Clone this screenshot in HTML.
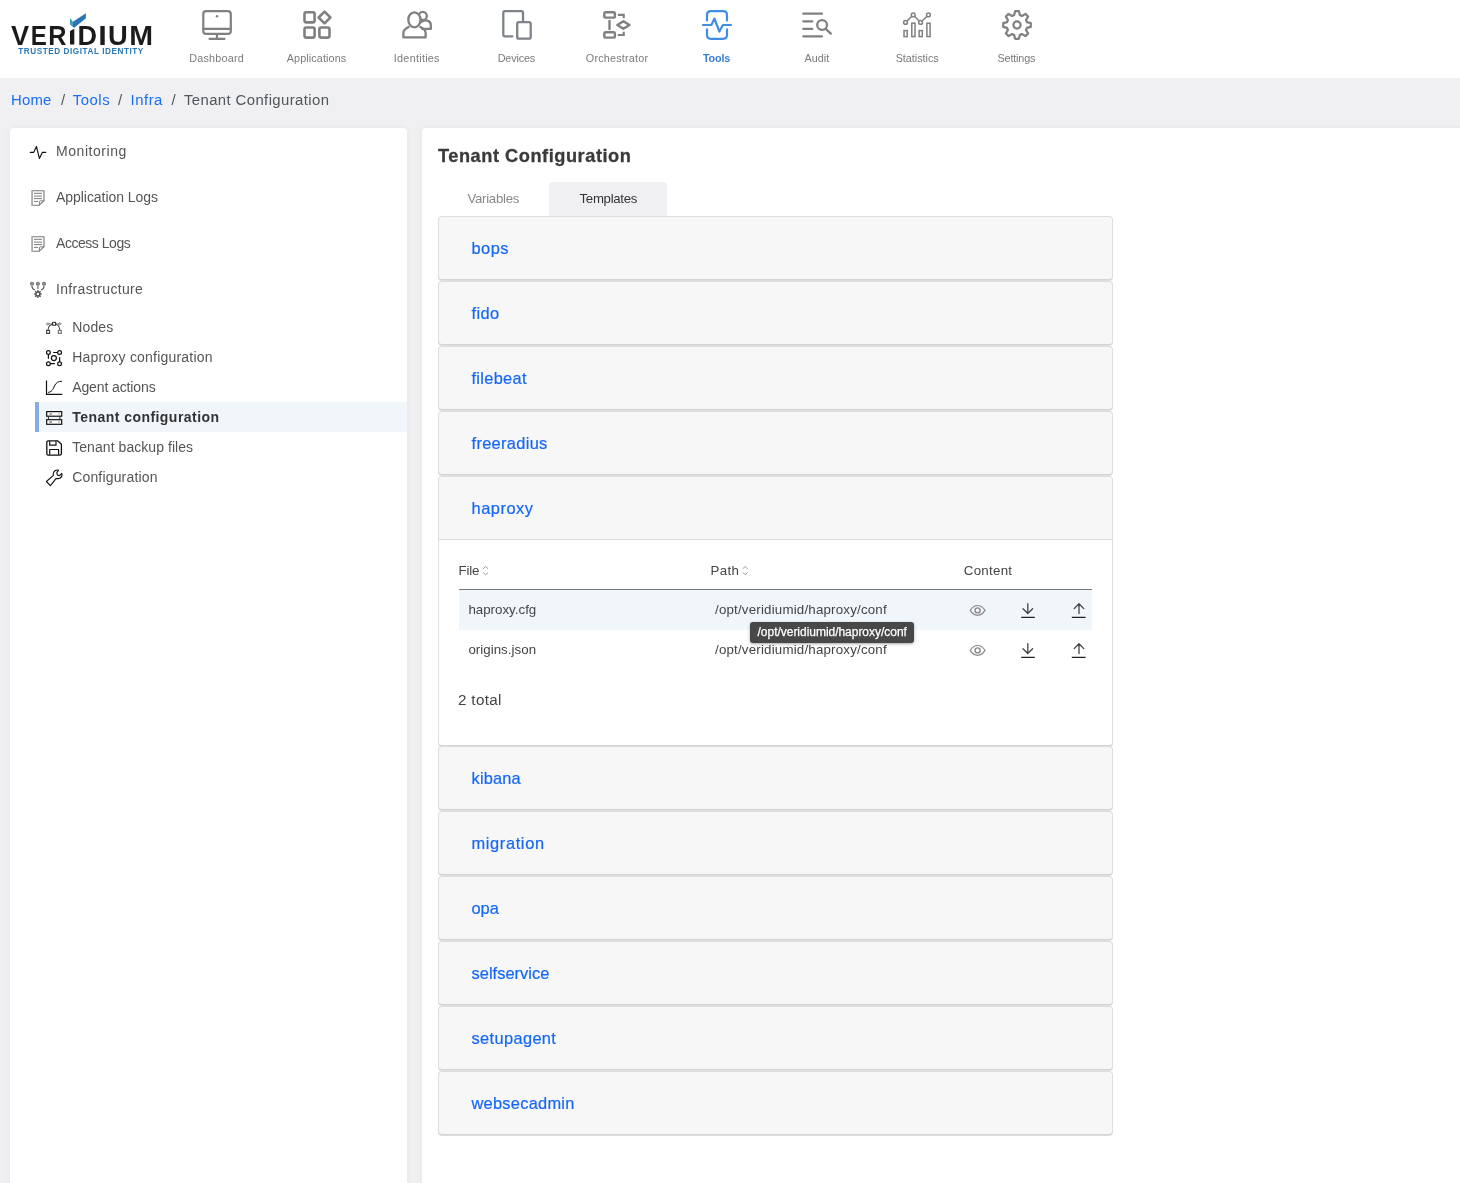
<!DOCTYPE html>
<html lang="en">
<head>
<meta charset="utf-8">
<title>Tenant Configuration</title>
<style>
*{box-sizing:border-box;margin:0;padding:0}
html,body{width:1460px;height:1183px;overflow:hidden}
body{background:#f0f0f2;font-family:"Liberation Sans",sans-serif;color:#555;position:relative}
.abs{position:absolute}
.t{position:absolute;white-space:nowrap;line-height:20px;height:20px}
#hdr{position:absolute;left:0;top:0;width:1460px;height:78px;background:#fff}
.nl{position:absolute;top:48px;width:100px;text-align:center;font-size:10.8px;line-height:20px;color:#7a7a7a}
.nl.act{color:#3b7ddd;font-weight:bold}
.ni{position:absolute;top:5px;width:40px;height:40px;overflow:visible}
.bc{font-size:15px;top:89.6px;color:#50565c}
.bc a{color:#1a6df8}
#side{position:absolute;left:10px;top:128px;width:397px;height:1075px;background:#fff;border-radius:4px;box-shadow:0 0 6px rgba(0,0,0,.05)}
#main{position:absolute;left:422px;top:128px;width:1058px;height:1075px;background:#fff;border-radius:4px;box-shadow:0 0 6px rgba(0,0,0,.05)}
.si{font-size:15px;color:#555;left:56px}
.ss{font-size:14.6px;color:#555;left:72px}
.sic{position:absolute;overflow:visible}
#selbg{position:absolute;left:35px;top:402px;width:372px;height:30px;background:#f1f6fb}
#selbar{position:absolute;left:35px;top:402px;width:4px;height:30px;background:#88ade6}
.pn{position:absolute;left:438px;width:675px;height:64px;background:#f7f7f7;border:1px solid #dedede;border-bottom-color:#d5d5d5;border-radius:4px;box-shadow:0 1px 0 rgba(0,0,0,.13)}
.pt{font-size:16.6px;color:#1567f7;left:472px;-webkit-text-stroke:.2px #1567f7}
.th{font-size:13.6px;color:#444}
.td{font-size:13.4px;color:#444}
</style>
</head>
<body>
<div id="wrap" style="position:absolute;left:0;top:0;width:1460px;height:1183px;will-change:transform">
<div id="hdr"></div>


<!-- header icons + logo -->
<svg class="abs" style="left:0;top:0" width="1460" height="78" viewBox="0 0 1460 78" fill="none" stroke-linecap="round" stroke-linejoin="round">
<!-- logo -->
<g stroke="none">
<g font-family="Liberation Sans" font-weight="bold" font-size="26.8" fill="#1b1b1d">
<text transform="translate(10.93 44.5) scale(1.016 1)">V</text>
<text transform="translate(30.71 44.5) scale(0.900 1)">E</text>
<text transform="translate(48.33 44.5) scale(0.942 1)">R</text>
<text transform="translate(77.41 44.5) scale(1.009 1)">D</text>
<text transform="translate(98.35 44.5) scale(1.146 1)">I</text>
<text transform="translate(107.96 44.5) scale(1.020 1)">U</text>
<text transform="translate(129.30 44.5) scale(1.066 1)">M</text>
</g>
<path d="M70 31.1 L74.3 28.8 L74.3 44.5 L70 44.5Z" fill="#1b1b1d"/>
<path d="M70 18 L72.9 21.8 L72.9 27 L70 24.6Z" fill="#3a9fb8"/>
<path d="M72.9 21.8 L85.9 13.3 L85.9 18.3 L74.2 27.8 L72.9 27Z" fill="#2a76b4"/>
<text x="18.3" y="53.6" font-family="Liberation Sans" font-weight="bold" font-size="8.2" fill="#2b7ab8" textLength="125" lengthAdjust="spacing">TRUSTED DIGITAL IDENTITY</text>
</g>
<!-- dashboard -->
<g stroke="#808080" stroke-width="2.2">
<rect x="203.3" y="11.1" width="27.5" height="22.8" rx="3"/>
<path d="M203.5 28.8H230.6M217 34.2V38.4M209.5 38.8H224.6"/>
<circle cx="217" cy="16.3" r="1.2" fill="#808080" stroke="none"/>
</g>
<!-- applications -->
<g stroke="#808080" stroke-width="2.6">
<rect x="304.5" y="12.3" width="10.1" height="10.1" rx="1.8"/>
<rect x="304.5" y="27.5" width="10.1" height="10.1" rx="1.8"/>
<rect x="319.4" y="27.5" width="10.1" height="10.1" rx="1.8"/>
<path d="M324.5 11.6L330.4 17.5L324.5 23.4L318.6 17.5Z"/>
</g>
<!-- identities -->
<g stroke="#808080" stroke-width="2.3">
<circle cx="422.8" cy="15.9" r="4"/>
<path d="M420.6 22.4C422.6 20.6 425.4 20.1 427.4 20.7C429.8 21.4 430.8 23 430.8 25.2V28.9H422.2"/>
<ellipse cx="414.4" cy="19.8" rx="6.1" ry="7.5" fill="#fff"/>
<path d="M408.6 27C405.5 28.6 403.4 30 403.4 32.5V37.4H425.6V32.5C425.6 30 423.5 28.6 420.4 27"/>
</g>
<!-- devices -->
<g stroke="#7d8388" stroke-width="2.3">
<path d="M512.4 36.3H505Q503.3 36.3 503.3 34.6V12.8Q503.3 11.1 505 11.1H521.3Q523 11.1 523 12.8V21"/>
<rect x="517.2" y="22.2" width="13.5" height="16.5" rx="1.8"/>
</g>
<!-- orchestrator -->
<g stroke="#808080" stroke-width="2.4">
<rect x="604.3" y="12.3" width="10.6" height="5.3" rx="1.3"/>
<rect x="604.3" y="32.3" width="10.6" height="5.3" rx="1.3"/>
<path d="M609.5 21V29"/>
<path d="M623.4 21.2L629.5 25L623.4 28.8L617.3 25Z"/>
</g>
<g stroke="#808080" stroke-width="2.2" stroke-linecap="butt" stroke-linejoin="miter">
<path d="M617.8 14.9H623.7V18.2M617.8 35H623.7V31.8"/>
</g>
<!-- tools (active) -->
<g stroke="#3f8de6" stroke-width="2.2">
<path d="M707 20.4V15Q707 11.1 711 11.1H723Q727 11.1 727 15V20.4M707 29.4V35Q707 38.8 711 38.8H723Q727 38.8 727 35V29.4"/>
</g>
<g stroke="#3f8de6" stroke-width="2.2">
<path d="M703 25H711.3L714.5 18.6L719.4 31.6L722.9 25H731"/>
</g>
<!-- audit -->
<g stroke="#808080" stroke-width="2.3">
<path d="M803.3 13.7H822M803.3 21.3H812.3M803.3 28.8H812.3M803.3 36.3H822"/>
<circle cx="822.1" cy="25" r="4.9"/>
<path d="M826 29.2L830.8 33.6"/>
</g>
<!-- statistics -->
<g stroke="#808080" stroke-width="1.5" stroke-linecap="butt" stroke-linejoin="miter">
<rect x="904" y="30.6" width="3.2" height="6"/>
<rect x="911.8" y="23.2" width="3.2" height="13.4"/>
<rect x="919.1" y="30.6" width="3.2" height="6"/>
<rect x="926.9" y="23.2" width="3.2" height="13.4"/>
<path d="M907 21L911.8 16.3M914.6 16.3L919.2 21M922 21L927 16.3"/>
<circle cx="905.5" cy="22.4" r="1.9"/><circle cx="913.2" cy="14.9" r="1.9"/><circle cx="920.6" cy="22.4" r="1.9"/><circle cx="928.4" cy="14.9" r="1.9"/>
</g>
<!-- settings -->
<g stroke="#808080" stroke-width="2.2">
<path d="M1014.10 15.12L1015.10 11.20 L1018.90 11.20 L1019.90 15.12A10.30 10.30 0 0 1 1021.94 15.96L1025.41 13.90 L1028.10 16.59 L1026.04 20.06A10.30 10.30 0 0 1 1026.88 22.10L1030.80 23.10 L1030.80 26.90 L1026.88 27.90A10.30 10.30 0 0 1 1026.04 29.94L1028.10 33.41 L1025.41 36.10 L1021.94 34.04A10.30 10.30 0 0 1 1019.90 34.88L1018.90 38.80 L1015.10 38.80 L1014.10 34.88A10.30 10.30 0 0 1 1012.06 34.04L1008.59 36.10 L1005.90 33.41 L1007.96 29.94A10.30 10.30 0 0 1 1007.12 27.90L1003.20 26.90 L1003.20 23.10 L1007.12 22.10A10.30 10.30 0 0 1 1007.96 20.06L1005.90 16.59 L1008.59 13.90 L1012.06 15.96A10.30 10.30 0 0 1 1014.10 15.12 Z"/>
<circle cx="1017" cy="25" r="3.6"/>
</g>
</svg>

<!-- nav labels -->
<div class="nl" style="left:166.6px;top:48.3px;font-size:10.8px;letter-spacing:0.225px">Dashboard</div>
<div class="nl" style="left:266.57px;top:48.3px;font-size:10.8px;letter-spacing:0.118px">Applications</div>
<div class="nl" style="left:366.8px;top:48.3px;font-size:10.8px;letter-spacing:0.278px">Identities</div>
<div class="nl" style="left:466.38px;top:48.3px;font-size:10.8px;letter-spacing:-0.133px">Devices</div>
<div class="nl" style="left:567px;top:48.3px;font-size:10.8px;letter-spacing:0.2px">Orchestrator</div>
<div class="nl act" style="left:666.6px;top:48.3px;font-size:10.8px;letter-spacing:-0.15px">Tools</div>
<div class="nl" style="left:766.9px;top:48.3px;font-size:10.8px;letter-spacing:0px">Audit</div>
<div class="nl" style="left:867.18px;top:48.3px;font-size:10.8px;letter-spacing:-0.021px">Statistics</div>
<div class="nl" style="left:966.4px;top:48.3px;font-size:10.8px;letter-spacing:-0.15px">Settings</div>

<!-- breadcrumb -->
<div class="t bc" style="left:10.9px;top:89.6px;font-size:14.9px;letter-spacing:0.25px"><a>Home</a></div>
<div class="t bc" style="left:61px">/</div>
<div class="t bc" style="left:72.78px;top:89.6px;font-size:14.9px;letter-spacing:0.525px"><a>Tools</a></div>
<div class="t bc" style="left:118px">/</div>
<div class="t bc" style="left:130.6px;top:89.6px;font-size:14.9px;letter-spacing:0.5px"><a>Infra</a></div>
<div class="t bc" style="left:171.5px">/</div>
<div class="t bc" style="left:184px;top:89.6px;font-size:14.9px;letter-spacing:0.395px">Tenant Configuration</div>

<div id="side"></div>
<div id="main"></div>

<!-- sidebar -->
<div id="selbg"></div><div id="selbar"></div>
<div class="t si" style="left:56px;top:141px;font-size:14px;letter-spacing:0.556px">Monitoring</div>
<div class="t si" style="left:56px;top:187px;font-size:14px;letter-spacing:-0.046px">Application Logs</div>
<div class="t si" style="left:56px;top:233px;font-size:14px;letter-spacing:-0.46px">Access Logs</div>
<div class="t si" style="left:56px;top:279px;font-size:14px;letter-spacing:0.339px">Infrastructure</div>
<div class="t ss" style="left:72.2px;top:316.9px;font-size:14px;letter-spacing:0.15px">Nodes</div>
<div class="t ss" style="left:72.2px;top:346.9px;font-size:14px;letter-spacing:0.21px">Haproxy configuration</div>
<div class="t ss" style="left:72.2px;top:376.9px;font-size:14px;letter-spacing:-0.108px">Agent actions</div>
<div class="t ss" style="left:72.2px;top:406.9px;font-size:14px;letter-spacing:0.458px;font-weight:bold;color:#333">Tenant configuration</div>
<div class="t ss" style="left:72.2px;top:436.9px;font-size:14px;letter-spacing:0.06px">Tenant backup files</div>
<div class="t ss" style="left:72.2px;top:466.9px;font-size:14px;letter-spacing:0.167px">Configuration</div>


<!-- sidebar icons -->
<svg class="abs" style="left:0;top:128px" width="420" height="380" viewBox="0 128 420 380" fill="none" stroke-linecap="round" stroke-linejoin="round">
<!-- monitoring -->
<path d="M30.3 152.4H33.6L36.5 146.6L39.4 158.4L42.3 152.4H45.7" stroke="#111" stroke-width="1.15"/>
<!-- app logs / access logs -->
<g stroke="#7a7a7a" stroke-width="1.1">
<path d="M32.2 190.7H44V200.6L39.3 205.2H32.2Z"/>
<path d="M31.9 190.7V205.2" stroke="#b8b8b8" stroke-width="1.6"/>
<path d="M44 200.9H40.2Q39.4 201 39.4 201.9V205" stroke-width="1"/>
<path d="M34.3 193.3H41.6M34.3 196.1H41.6M34.3 198.6H41.6M34.3 201.4H37.6" stroke-width="1"/>
</g>
<g transform="translate(0 46)" stroke="#7a7a7a" stroke-width="1.1">
<path d="M32.2 190.7H44V200.6L39.3 205.2H32.2Z"/>
<path d="M31.9 190.7V205.2" stroke="#b8b8b8" stroke-width="1.6"/>
<path d="M44 200.9H40.2Q39.4 201 39.4 201.9V205" stroke-width="1"/>
<path d="M34.3 193.3H41.6M34.3 196.1H41.6M34.3 198.6H41.6M34.3 201.4H37.6" stroke-width="1"/>
</g>
<!-- infrastructure -->
<g stroke="#555" stroke-width="1.1">
<circle cx="32" cy="283.8" r="1.5" fill="#999" stroke="#777"/><circle cx="37.9" cy="283.8" r="1.5" fill="#999" stroke="#777"/><circle cx="44" cy="283.8" r="1.5" fill="#999" stroke="#777"/>
<path d="M32 286.2C32 288 33 289.2 34.6 289.8M37.9 286.2V288.4M44 286.2C44 288 43 289.2 41.4 289.8"/>
<path d="M37.10 291.42L37.35 290.10 L38.45 290.10 L38.70 291.42A2.70 2.70 0 0 1 39.16 291.61L40.27 290.85 L41.05 291.63 L40.29 292.74A2.70 2.70 0 0 1 40.48 293.20L41.80 293.45 L41.80 294.55 L40.48 294.80A2.70 2.70 0 0 1 40.29 295.26L41.05 296.37 L40.27 297.15 L39.16 296.39A2.70 2.70 0 0 1 38.70 296.58L38.45 297.90 L37.35 297.90 L37.10 296.58A2.70 2.70 0 0 1 36.64 296.39L35.53 297.15 L34.75 296.37 L35.51 295.26A2.70 2.70 0 0 1 35.32 294.80L34.00 294.55 L34.00 293.45 L35.32 293.20A2.70 2.70 0 0 1 35.51 292.74L34.75 291.63 L35.53 290.85 L36.64 291.61A2.70 2.70 0 0 1 37.10 291.42 Z" fill="#555" stroke="none"/>
<circle cx="37.9" cy="294" r="1.25" fill="#fff" stroke="none"/>
</g>
<!-- nodes -->
<g stroke="#444" stroke-width="1.1">
<path d="M48 330.2C48 326.6 50.6 323.9 54 323.9C57.4 323.9 59.8 326.6 59.8 330.2"/>
<path d="M49.5 323.8H58.5" stroke="#888" stroke-width="0.9"/>
<path d="M46.4 323.8L48 322.7L49.6 323.8L48 324.9Z" fill="#999" stroke="#888" stroke-width=".7"/>
<path d="M58.2 323.8L59.8 322.7L61.4 323.8L59.8 324.9Z" fill="#999" stroke="#888" stroke-width=".7"/>
<rect x="52.6" y="322.3" width="3" height="3" fill="#fff" stroke="#333"/>
<rect x="46.6" y="330.4" width="3" height="3" fill="#fff"/>
<rect x="58.3" y="330.4" width="3" height="3" fill="#fff" stroke="#777"/>
</g>
<!-- haproxy configuration -->
<g stroke="#111" stroke-width="1.2">
<circle cx="48.4" cy="352.5" r="1.9"/><circle cx="59.6" cy="352.5" r="1.9"/><circle cx="48.4" cy="363.7" r="1.9"/><circle cx="59.6" cy="363.7" r="1.9"/>
<circle cx="53.9" cy="358.1" r="2.5"/>
<path d="M48.4 354.8V358.3M57.2 352.5H53.6M59.6 361.4V357.7M50.8 363.7H54.4"/>
</g>
<!-- agent actions -->
<g stroke="#111" stroke-width="1.2">
<path d="M46.5 381.1V394.4H61.7" stroke-linecap="square" stroke-linejoin="miter"/>
<path d="M48.3 392.4C53 392 53.6 387.2 55 385C56.5 382.6 58 381.4 61.6 381.2" stroke-width="1"/>
</g>
<!-- tenant configuration -->
<g stroke="#111" stroke-width="1.2" stroke-linejoin="miter">
<rect x="46.7" y="411.6" width="15" height="4.6" fill="#fff"/>
<rect x="46.7" y="419.7" width="15" height="4.6" fill="#fff"/>
<path d="M48.4 416.8V419.2M59.9 416.8V419.2" stroke-width=".9" stroke-linecap="butt"/>
<path d="M49.5 413.9H52M49.5 422H52" stroke="#777" stroke-width="1.3" stroke-linecap="butt"/>
<path d="M58.2 413.9H59.9M58.2 422H59.9" stroke="#aaa" stroke-width="1.3" stroke-linecap="butt"/>
</g>
<!-- tenant backup files -->
<g stroke="#111" stroke-width="1.3">
<path d="M48.2 440.8H57.6L61.4 444.2V453.4Q61.4 455.1 59.7 455.1H48.2Q46.8 455.1 46.8 453.4V442.3Q46.8 440.8 48.2 440.8Z"/>
<path d="M49.7 441.6V445.2H56V441.6M49.7 454.3V449.5H58.6V454.3" stroke-width="1.2"/>
</g>
<!-- configuration (wrench) -->
<g stroke="#111" stroke-width="1.1">
<path d="M58.6 470.2C56.4 469.6 54 470.9 53.4 473.1C53.2 473.9 53.2 474.6 53.4 475.3L46.4 481.5L50.4 485.7L56.2 478.4C57.1 478.7 58.1 478.7 59 478.4C61.2 477.7 62.4 475.6 61.8 473.3L59.6 475.6L57.4 475L56.8 472.6Z"/>
</g>
</svg>


<!-- main -->
<div class="t" style="left:438px;top:146.3px;font-size:18.2px;letter-spacing:0.543px;font-weight:bold;color:#3a3a3a;-webkit-text-stroke:.3px #3a3a3a">Tenant Configuration</div>
<div class="abs" style="left:549px;top:182px;width:118px;height:35px;background:#f0f0f2;border-radius:4px 4px 0 0"></div>
<div class="t" style="left:467.38px;top:189.2px;font-size:13.2px;letter-spacing:-0.25px;color:#888">Variables</div>
<div class="t" style="left:579.57px;top:189.2px;font-size:13.2px;letter-spacing:-0.286px;color:#333">Templates</div>

<div class="pn" style="top:216px"></div>
<div class="t pt" style="left:471.5px;top:238px;font-size:16.4px;letter-spacing:0.5px">bops</div>
<div class="pn" style="top:281px"></div>
<div class="t pt" style="left:471.5px;top:303px;font-size:16.4px;letter-spacing:0.367px">fido</div>
<div class="pn" style="top:346px"></div>
<div class="t pt" style="left:471.5px;top:368px;font-size:16.4px;letter-spacing:0.3px">filebeat</div>
<div class="pn" style="top:411px"></div>
<div class="t pt" style="left:471.5px;top:433px;font-size:16.4px;letter-spacing:0.322px">freeradius</div>
<div class="pn" style="top:476px;height:270px;background:#fff"></div>
<div class="abs" style="left:439px;top:477px;width:673px;height:63px;background:#f7f7f7;border-bottom:1px solid #dcdcdc;border-radius:3px 3px 0 0"></div>
<div class="t pt" style="left:471.5px;top:498px;font-size:16.4px;letter-spacing:0.534px">haproxy</div>
<div class="pn" style="top:746px"></div>
<div class="t pt" style="left:471.5px;top:768px;font-size:16.4px;letter-spacing:0.18px">kibana</div>
<div class="pn" style="top:811px"></div>
<div class="t pt" style="left:471.5px;top:833px;font-size:16.4px;letter-spacing:0.639px">migration</div>
<div class="pn" style="top:876px"></div>
<div class="t pt" style="left:471.5px;top:898px;font-size:16.4px;letter-spacing:0px">opa</div>
<div class="pn" style="top:941px"></div>
<div class="t pt" style="left:471.5px;top:963px;font-size:16.4px;letter-spacing:0.04px">selfservice</div>
<div class="pn" style="top:1006px"></div>
<div class="t pt" style="left:471.5px;top:1028px;font-size:16.4px;letter-spacing:0.366px">setupagent</div>
<div class="pn" style="top:1071px"></div>
<div class="t pt" style="left:471.5px;top:1093px;font-size:16.4px;letter-spacing:0.26px">websecadmin</div>

<!-- table -->
<div class="t th" style="left:458.57px;top:561px;font-size:13.3px;letter-spacing:-0.234px">File</div>
<div class="t th" style="left:710.57px;top:561px;font-size:13.3px;letter-spacing:0.333px">Path</div>
<div class="t th" style="left:963.76px;top:561px;font-size:13.3px;letter-spacing:0.284px">Content</div>
<div class="abs" style="left:459px;top:589px;width:633px;height:1px;background:#777"></div>
<div class="abs" style="left:459px;top:590px;width:633px;height:40px;background:#f1f6fb"></div>
<div class="t td" style="left:468.38px;top:600px;font-size:13.3px;letter-spacing:0.01px">haproxy.cfg</div>
<div class="t td" style="left:715px;top:600px;font-size:13.3px;letter-spacing:0.197px">/opt/veridiumid/haproxy/conf</div>
<div class="t td" style="left:468.38px;top:640px;font-size:13.3px;letter-spacing:0.037px">origins.json</div>
<div class="t td" style="left:715px;top:640px;font-size:13.3px;letter-spacing:0.197px">/opt/veridiumid/haproxy/conf</div>
<div class="t" style="left:458px;top:690.1px;font-size:15.2px;letter-spacing:0.35px;color:#444">2 total</div>

<!-- table icons -->
<svg class="abs" style="left:440px;top:550px" width="670" height="120" viewBox="440 550 670 120" fill="none" stroke-linecap="round" stroke-linejoin="round">
<g stroke="#999" stroke-width="1">
<path d="M483.4 568.5L485.6 566.5L487.8 568.5M483.4 572.7L485.6 574.7L487.8 572.7"/>
<path d="M743 568.5L745.2 566.5L747.4 568.5M743 572.7L745.2 574.7L747.4 572.7"/>
</g>
<g>
<g stroke="#8a8a8a" stroke-width="1.2">
<path d="M970.2 610.4C972.2 607.2 974.8 605.5 977.6 605.5C980.4 605.5 983 607.2 985 610.4C983 613.6 980.4 615.3 977.6 615.3C974.8 615.3 972.2 613.6 970.2 610.4Z"/>
<circle cx="977.6" cy="610.4" r="2.5" stroke-width="1.4"/>
</g>
<g stroke="#444" stroke-width="1.3">
<path d="M1027.8 603.6V613.2M1023 608.8L1027.8 613.5L1032.6 608.8"/>
<path d="M1079 613.6V604M1074.2 608.6L1079 603.7L1083.8 608.6"/>
</g>
<path d="M1021.2 617.4H1034.8M1071.8 617.4H1085.6" stroke="#222" stroke-width="1.2" stroke-linecap="butt"/>
</g>
<g transform="translate(0 40)">
<g stroke="#8a8a8a" stroke-width="1.2">
<path d="M970.2 610.4C972.2 607.2 974.8 605.5 977.6 605.5C980.4 605.5 983 607.2 985 610.4C983 613.6 980.4 615.3 977.6 615.3C974.8 615.3 972.2 613.6 970.2 610.4Z"/>
<circle cx="977.6" cy="610.4" r="2.5" stroke-width="1.4"/>
</g>
<g stroke="#444" stroke-width="1.3">
<path d="M1027.8 603.6V613.2M1023 608.8L1027.8 613.5L1032.6 608.8"/>
<path d="M1079 613.6V604M1074.2 608.6L1079 603.7L1083.8 608.6"/>
</g>
<path d="M1021.2 617.4H1034.8M1071.8 617.4H1085.6" stroke="#222" stroke-width="1.2" stroke-linecap="butt"/>
</g>
</svg>

<!-- tooltip -->
<div class="abs" style="left:750px;top:622px;width:164px;height:20.5px;background:#484848;border-radius:3px;box-shadow:0 1px 3px rgba(0,0,0,.35)"></div>
<div class="t" style="left:757.57px;top:621.8px;font-size:12px;letter-spacing:-0.029px;color:#fff;-webkit-text-stroke:.25px #fff">/opt/veridiumid/haproxy/conf</div>
</div>
</body>
</html>
